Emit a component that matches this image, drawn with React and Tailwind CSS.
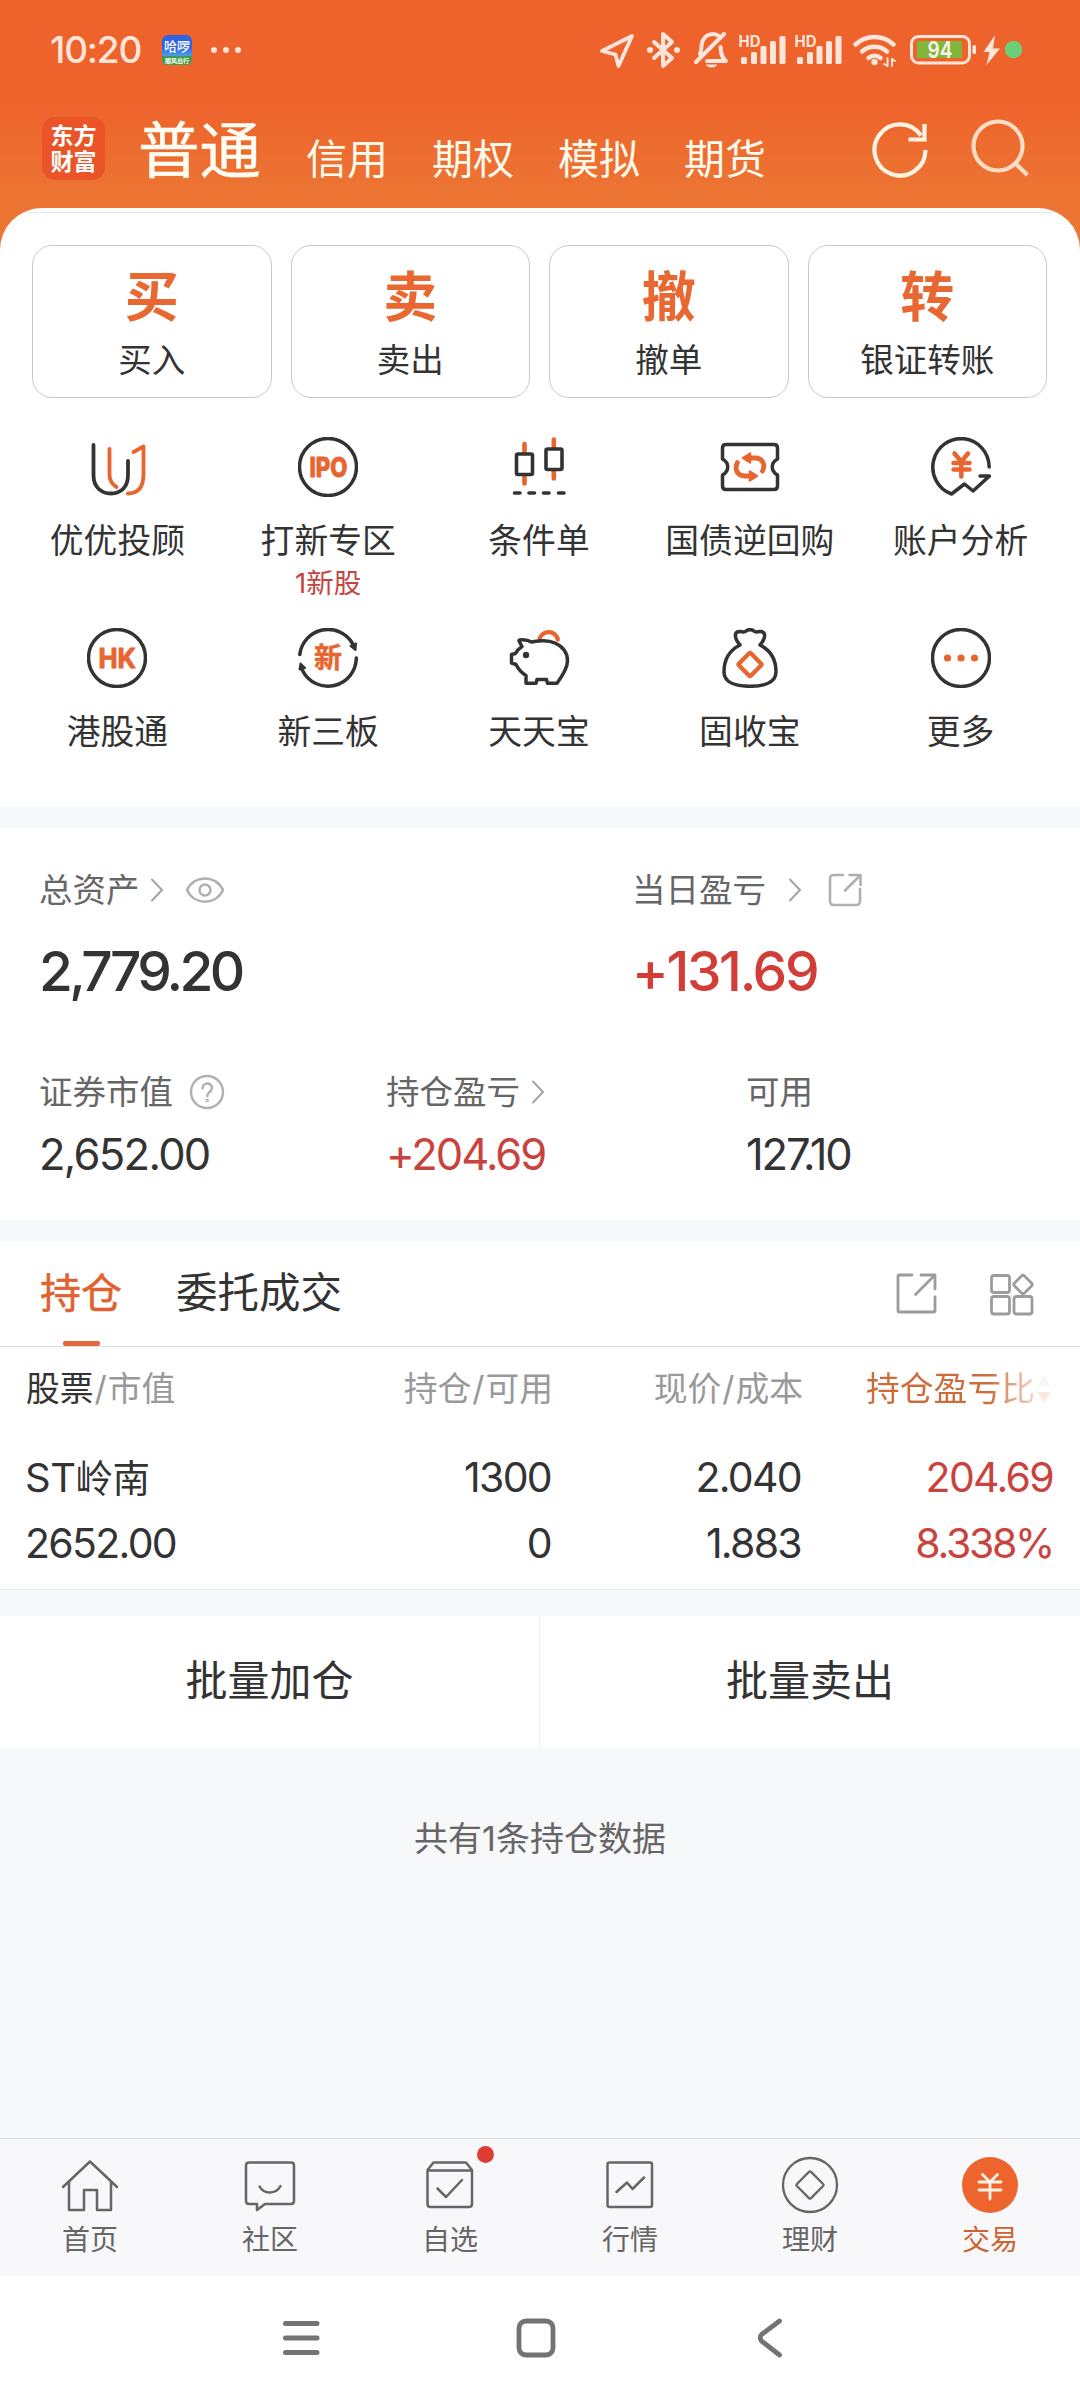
const DARK = "#333333";
const ORANGE = "#e8652f";

/* Icon canvas: `box` is "x y width height"; the drawing keeps that coordinate space. */
function Ic({ box, className = "", children, stroke = DARK, sw = 3.5 }) {
  const [, , w, h] = box.split(" ");
  return (
    <svg
      viewBox={box}
      width={w}
      height={h}
      className={`shrink-0 ${className}`}
      fill="none"
      stroke={stroke}
      strokeWidth={sw}
      strokeLinecap="round"
      strokeLinejoin="round"
    >
      {children}
    </svg>
  );
}

function Signal({ className }) {
  return (
    <Ic box="738 30 48 40" stroke="none" className={className}>
      <text x="738.500" y="46.500" fill="#fde5db" fontSize="15.500" fontWeight="700" textLength="22" lengthAdjust="spacingAndGlyphs">HD</text>
      <g fill="#fde5db">
        <rect x="741" y="57" width="6" height="7" rx="1.5" />
        <rect x="751" y="52" width="6" height="12" rx="1.5" />
        <rect x="760.500" y="46" width="6" height="18" rx="1.5" />
        <rect x="770" y="41" width="6" height="23" rx="1.5" />
        <rect x="779.500" y="36" width="6" height="28" rx="1.5" />
      </g>
    </Ic>
  );
}

function StatusBar() {
  const c = "#fde5db";
  return (
    <div className="flex h-[100px] items-start pt-[30px] pl-[50px]">
      <div className="h-10 w-[112px] text-[37px] leading-10 font-medium tracking-[-1.2px] text-[#fde5db]">10:20</div>
      <div className="mt-[5px] flex h-[30px] w-[30px] flex-col items-center overflow-hidden rounded-[6px] bg-gradient-to-b from-[#2f62e6] from-40% to-[#4d9be8] to-70%">
        <span className="h-[21px] text-[13px] leading-[23px] font-medium whitespace-nowrap text-white">哈啰</span>
        <span className="h-[9px] w-full bg-[#3f9d46] text-center text-[6px] leading-[9px] font-bold whitespace-nowrap text-white">顺风出行</span>
      </div>
      <div className="mt-[17px] ml-[19px] flex gap-[6px]">
        <i className="size-[6px] rounded-full bg-[#fde5db]" />
        <i className="size-[6px] rounded-full bg-[#fde5db]" />
        <i className="size-[6px] rounded-full bg-[#fde5db]" />
      </div>
      <div className="ml-auto flex pr-[56px]">
        <Ic box="598 30 38 40" stroke={c} sw={3.8}>
          <path d="M632 36 L602 51 L615.500 54.500 L618.500 66 Z" />
        </Ic>
        <Ic box="646 30 36 40" stroke={c} sw={4} className="ml-[10px]">
          <path d="M654 42 L672 58 L663 66 V34 L672 42 L654 58" />
          <circle cx="650" cy="50" r="3" fill={c} stroke="none" />
          <circle cx="677" cy="50" r="3" fill={c} stroke="none" />
        </Ic>
        <Ic box="693 30 36 40" stroke={c} sw={4} className="ml-[11px]">
          <path d="M696 62 L724 34" />
          <path d="M700 54 C702 50 701 46 702 43 C704 34 714 32 719 36" />
          <path d="M707 61 H726 C721 57 721 52 720.500 47" />
          <path d="M706 64.500 H717 C716 68.500 707 68.500 706 64.500Z" fill={c} stroke="none" />
        </Ic>
        <Signal className="ml-[9px]" />
        <Signal className="ml-[8px]" />
        <Ic box="852 30 46 40" stroke={c} sw={4.5} className="ml-[10px]">
          <path d="M855.500 44.500 C866 34.500 883 34.500 893.500 44.500" />
          <path d="M862 51.500 C869 45 880 45 887 51.500" />
          <path d="M868.500 58 C872 55 877 55 880.500 58" />
          <circle cx="874.500" cy="62" r="3.200" fill={c} stroke="none" />
          <path d="M884 64 L887.500 66 V58 M892 66 V59 L895 61" strokeWidth="2" />
        </Ic>
        <Ic box="909 30 68 40" stroke={c} sw={3} className="ml-[11px]">
          <rect x="911.500" y="36.500" width="58" height="26.500" rx="7" />
          <rect x="917" y="41" width="45" height="17" fill="#7fb63b" stroke="none" />
          <rect x="972.500" y="45" width="3.500" height="9" rx="1.500" fill={c} stroke="none" />
          <text x="927.500" y="58" fill="#fdf3e8" stroke="none" fontSize="23" fontWeight="600" textLength="25" lengthAdjust="spacingAndGlyphs">94</text>
        </Ic>
        <Ic box="982 30 42 40" stroke="none" className="ml-[5px]">
          <path d="M995 35 L983.500 52 H989.500 L986.500 65 L1000 48.500 H993 Z" fill={c} />
          <circle cx="1013.500" cy="49.500" r="8.700" fill="#6bcf77" />
        </Ic>
      </div>
    </div>
  );
}

function TopNav() {
  return (
    <div className="flex h-[108px] items-start pl-[42px]">
      <div className="mt-[17px] flex h-[63px] w-[63px] flex-col items-center justify-center rounded-[13px] bg-[#ea5427] text-[23px] leading-[26px] font-bold text-white">
        <span>东方</span>
        <span>财富</span>
      </div>
      <div className="mt-[11px] ml-[33px] w-[168px] text-[61.500px] leading-[80px] text-[#fffdf3] [-webkit-text-stroke:0.500px_#fffdf3]">普通</div>
      <div className="mt-[34px] flex gap-[44px] text-[41px] leading-[50px] text-[#fff9ec]">
        {["信用", "期权", "模拟", "期货"].map((t) => (
          <span key={t} className="w-[82px]">{t}</span>
        ))}
      </div>
      <Ic box="870 118 60 62" stroke="#fff3e3" sw={4.200} className="mt-[18px] ml-[104px]">
        <path d="M925.500 150 A25.500 25.500 0 1 1 921 135.500" strokeLinecap="butt" />
        <path d="M924.500 124 V139.500 H908.500" strokeLinecap="butt" strokeLinejoin="miter" />
      </Ic>
      <Ic box="970 118 62 62" stroke="#fddcc4" sw={4.200} className="mt-[18px] ml-[40px]">
        <circle cx="998" cy="146" r="24.500" />
        <path d="M1015.500 163.500 L1027.500 175" strokeLinecap="butt" />
      </Ic>
    </div>
  );
}

const actions = [
  ["买", "买入"],
  ["卖", "卖出"],
  ["撤", "撤单"],
  ["转", "银证转账"],
];

const shortcuts = [
  {
    label: "优优投顾",
    icon: (
      <Ic box="88 437 60 60" sw={3.800}>
        <path d="M94.500 445 V475 C94.500 487 102 493.500 112 493.500 C122 493.500 129 487 129 475 V461" />
        <path d="M110.500 449 V474 C110.500 480 112.500 484 117.500 487" stroke={ORANGE} />
        <path d="M134.500 452 L144.500 446.500 V474 C144.500 487 139 493.500 129 493.500" stroke={ORANGE} />
      </Ic>
    ),
  },
  {
    label: "打新专区",
    note: "1新股",
    icon: (
      <Ic box="299 437 60 60">
        <circle cx="329" cy="467" r="28.500" />
        <text x="310.500" y="476.800" fill={ORANGE} stroke={ORANGE} strokeWidth="0.800" fontSize="27" fontWeight="800" textLength="38" lengthAdjust="spacingAndGlyphs">IPO</text>
      </Ic>
    ),
  },
  {
    label: "条件单",
    icon: (
      <Ic box="510 437 60 60" sw={3.600}>
        <path d="M525.500 444 V452 M525.500 476 V483.500 M554.800 439.500 V447 M554.800 471 V478.500" stroke={ORANGE} strokeWidth="4.600" />
        <rect x="517.500" y="454" width="16" height="20.500" rx="1.500" />
        <rect x="547" y="449" width="16" height="20.500" rx="1.500" />
        <path d="M515.500 493 H521 M530 493 H535.500 M544.500 493 H550 M559.500 493 H565" />
      </Ic>
    ),
  },
  {
    label: "国债逆回购",
    icon: (
      <Ic box="721 437 60 60">
        <path d="M727 444.500 H775 Q778.500 444.500 778.500 448 V459 C771.500 463 771.500 471 778.500 475 V486 Q778.500 489.500 775 489.500 H727 Q723.500 489.500 723.500 486 V475 C730.500 471 730.500 463 723.500 459 V448 Q723.500 444.500 727 444.500Z" />
        <g stroke={ORANGE} strokeWidth="4.800">
          <path d="M750 458 H756 C764 458 766.500 465 763.500 471" />
          <path d="M752 476 H746 C738 476 735 469 738.500 462.500" />
        </g>
        <path d="M743.500 458 L751.500 453 V463Z M758.500 476 L750.500 471 V481Z" fill={ORANGE} stroke={ORANGE} strokeWidth="1.500" />
      </Ic>
    ),
  },
  {
    label: "账户分析",
    icon: (
      <Ic box="931 437 60 60">
        <path d="M989.200 467 A28.200 28.500 0 1 0 951.500 494 L964.500 484 L973 491 L989.500 476 H980" />
        <path d="M954.500 453.500 L961.300 461.500 L968 453.500 M961.300 462 V476.500 M953.500 463 H969.500 M953.500 469.500 H969.500" stroke={ORANGE} strokeWidth="4.500" />
      </Ic>
    ),
  },
  {
    label: "港股通",
    icon: (
      <Ic box="88 628 60 60">
        <circle cx="118" cy="658" r="28.500" />
        <text x="99.500" y="668" fill={ORANGE} stroke={ORANGE} strokeWidth="1" fontSize="27" fontWeight="700" textLength="37.500" lengthAdjust="spacingAndGlyphs">HK</text>
      </Ic>
    ),
  },
  {
    label: "新三板",
    icon: (
      <Ic box="299 628 60 60">
        <path d="M300.800 654.500 A28.400 28.400 0 0 1 353.500 643.500 M357.300 658 A28.400 28.400 0 0 1 303.500 670.500" />
        <path d="M351.500 646 L357 643.500 L356.500 650Z M300.500 669.500 L301.500 663.500 L306 668Z" fill={DARK} strokeWidth="2" />
        <text x="315" y="667.500" fill={ORANGE} stroke={ORANGE} strokeWidth="0.500" fontSize="28" fontWeight="700">新</text>
      </Ic>
    ),
  },
  {
    label: "天天宝",
    icon: (
      <Ic box="509 628 62 60">
        <path d="M540.800 638 A9.500 9.500 0 0 1 558.800 639.500" stroke={ORANGE} strokeWidth="4.300" />
        <path d="M520 641 Q520 639.800 522 639.800 C526 639.500 530 640.500 532.500 642 C540 640.500 550 640 556 643 C566 647.500 568.500 655 568.500 661 C568.500 668 564 675 558 683.200 H548.500 L547.500 679.500 H538 L537 683.200 H527 V675.500 C522 672.500 519 668.500 517 664.500 L512.500 663 V654.500 L516.500 653.500 C518 650.500 520 648.500 523 646.500 Z" />
        <circle cx="527" cy="655" r="3.200" fill={DARK} stroke="none" />
      </Ic>
    ),
  },
  {
    label: "固收宝",
    icon: (
      <Ic box="721 628 60 60">
        <path d="M741 645 C735 638 735 632 740 631.500 C743 631.300 745 632.700 746.500 631.500 C749 629 753 629 755.500 631.500 C757 632.700 759 631.300 762 631.500 C767 632 767 638 761 645 C773 651 777 661 777 672 C777 683 764 686.300 751 686.300 C738 686.300 725 683 725 672 C725 661 729 651 741 645Z" />
        <rect x="742.500" y="656" width="17" height="17" rx="1.500" transform="rotate(45 751 664.500)" stroke={ORANGE} strokeWidth="4.300" />
      </Ic>
    ),
  },
  {
    label: "更多",
    icon: (
      <Ic box="931 628 60 60">
        <circle cx="961" cy="658" r="28.500" />
        <g fill={ORANGE} stroke="none">
          <circle cx="947.500" cy="658" r="3.600" />
          <circle cx="961" cy="658" r="3.600" />
          <circle cx="974.500" cy="658" r="3.600" />
        </g>
      </Ic>
    ),
  },
];

function Actions() {
  return (
    <div className="h-[599px] overflow-hidden rounded-t-[42px] bg-white pt-1">
      <div className="h-px bg-[#e6e6e6]" />
      <div className="mt-8 grid grid-cols-4 gap-[19px] pr-[33px] pl-8">
        {actions.map(([big, label]) => (
          <div key={label} className="flex h-[153px] flex-col items-center rounded-[20px] border border-[#c9c9c9] pt-[21px]">
            <span className="text-[54px] leading-[62px] font-bold text-[#e96731]">{big}</span>
            <span className="mt-[9px] text-[33.500px] leading-[44px] text-[#333333]">{label}</span>
          </div>
        ))}
      </div>
      <div className="mt-[39px] grid grid-cols-5 pr-[14px] pl-[12px]">
        {shortcuts.map((s) => (
          <div key={s.label} className="flex h-[191px] flex-col items-center">
            {s.icon}
            <span className="mt-[22px] text-[33.800px] leading-[44px] whitespace-nowrap text-[#333333]">{s.label}</span>
            {s.note && <span className="mt-[3px] text-[27.500px] leading-[34px] text-[#c4453f]">{s.note}</span>}
          </div>
        ))}
      </div>
    </div>
  );
}

function Chevron({ className }) {
  return (
    <Ic box="0 0 14 24" stroke="#a3a3a3" sw={2} className={className}>
      <path d="M2 1.500 L12 12 L2 22.500" strokeLinejoin="miter" />
    </Ic>
  );
}

function Assets() {
  return (
    <div className="flex h-[392px] flex-col bg-white pl-[39px] text-[33.500px] text-[#666666]">
      <div className="mt-[40px] flex h-[44px] items-center leading-[44px]">
        <div className="flex w-[593px] items-center">
          总资产
          <Chevron className="ml-[10px]" />
          <Ic box="185 876 40 28" stroke="#b0b0b0" sw={2.500} className="ml-[21px]">
            <path d="M187 890 C194 874.500 216 874.500 223 890 C216 905.500 194 905.500 187 890Z" />
            <circle cx="205" cy="890" r="5.500" />
          </Ic>
        </div>
        当日盈亏
        <Chevron className="ml-[22px]" />
        <Ic box="828 872 36 36" stroke="#b0b0b0" sw={2.600} className="ml-[26px]">
          <path d="M843 875 H834 Q830 875 830 879 V901 Q830 905 834 905 H856 Q860 905 860 901 V889" />
          <path d="M845 890.500 L859.500 876 M849.500 875 H860.500 V885" />
        </Ic>
      </div>
      <div className="mt-[24px] flex h-[70px] text-[55px] leading-[70px] font-medium">
        <div className="w-[593px] tracking-[-3.700px] text-[#333333]">2,779.20</div>
        <div className="tracking-[-2.300px] text-[#d23d37]">+131.69</div>
      </div>
      <div className="mt-[64px] flex h-[44px] items-center leading-[44px]">
        <div className="flex w-[347px] items-center">
          证券市值
          <Ic box="189 1074 36 36" stroke="#b0b0b0" sw={2.400} className="ml-[16px]">
            <circle cx="207" cy="1092" r="16" />
            <path d="M202.500 1088.500 C202.500 1082 212 1082 212 1088 C212 1092 207.200 1092 207.200 1096" />
            <circle cx="207.200" cy="1100.500" r="0.600" />
          </Ic>
        </div>
        <div className="flex w-[360px] items-center">
          持仓盈亏
          <Chevron className="ml-[11px]" />
        </div>
        可用
      </div>
      <div className="mt-[12px] flex h-[56px] text-[43.500px] leading-[56px] text-[#333333]">
        <div className="w-[347px] tracking-[-1.700px]">2,652.00</div>
        <div className="w-[360px] tracking-[-2px] text-[#c9433e]">+204.69</div>
        <div className="tracking-[-2.100px]">127.10</div>
      </div>
    </div>
  );
}

function Holdings() {
  return (
    <div className="h-[349px] border-b border-[#ebecee] bg-white">
      <div className="flex h-[106px] border-b border-[#dedede] pl-[40px]">
        <div className="flex w-[82px] flex-col items-center">
          <span className="mt-[26px] h-[74px] text-[41px] leading-[52px] text-[#e0622f] [-webkit-text-stroke:0.500px_#e0622f]">持仓</span>
          <span className="h-[5px] w-[37px] rounded-[2px] bg-[#e0683a]" />
        </div>
        <span className="mt-[26px] ml-[54px] text-[41.500px] leading-[52px] text-[#333333]">委托成交</span>
        <Ic box="896 1272 42 42" stroke="#9c9c9c" sw={2.800} className="mt-[31px] ml-[554px]">
          <path d="M912 1275 H899.500 Q898 1275 898 1276.500 V1310.500 Q898 1312 899.500 1312 H933.500 Q935 1312 935 1310.500 V1297" />
          <path d="M915.500 1294.500 L934 1276 M921 1275 H935 V1289" />
        </Ic>
        <Ic box="988 1272 46 46" stroke="#9c9c9c" sw={2.800} className="mt-[31px] ml-[50px]">
          <rect x="991.500" y="1275.500" width="18" height="17" rx="2.500" />
          <rect x="991.500" y="1296.500" width="18" height="17.500" rx="2.500" />
          <rect x="1014" y="1296.500" width="18" height="17.500" rx="2.500" />
          <path d="M1021.500 1276 Q1023 1274.500 1024.500 1276 L1031.500 1283 Q1033 1284.500 1031.500 1286 L1024.500 1293 Q1023 1294.500 1021.500 1293 L1014.500 1286 Q1013 1284.500 1014.500 1283Z" />
        </Ic>
      </div>
      <div className="grid grid-cols-[300px_227px_250px_1fr] pt-[20px] pr-[28px] pl-[26px] text-right text-[33.800px] leading-[44px] text-[#999999]">
        <div className="text-left"><span className="text-[#333333]">股票</span><span className="px-px">/</span>市值</div>
        <div>持仓<span className="px-px">/</span>可用</div>
        <div>现价<span className="px-px">/</span>成本</div>
        <div className="flex items-center justify-end whitespace-nowrap">
          <span className="bg-gradient-to-r from-[#cb6c3a] from-72% to-[#cb6c3a]/25 bg-clip-text text-transparent">持仓盈亏比</span>
          <Ic box="0 0 16 32" stroke="none" className="ml-px">
            <path d="M8 2 L14.500 13 H1.500Z" fill="#f5f6f8" />
            <path d="M8 30 L14.500 19 H1.500Z" fill="#fbe9e0" />
          </Ic>
        </div>
      </div>
      <div className="grid grid-cols-[300px_226px_250px_1fr] pt-[34px] pr-[27px] pl-[25px] text-right text-[41px] leading-[65px] tracking-[-1.700px] text-[#333333]">
        <div className="text-left text-[40px] tracking-[-0.500px]">ST<span className="text-[37.500px]">岭南</span></div>
        <div>1300</div>
        <div>2.040</div>
        <div className="text-[#c9433e]">204.69</div>
        <div className="text-left">2652.00</div>
        <div>0</div>
        <div>1.883</div>
        <div className="tracking-[-2.300px] text-[#c9433e]">8.338%</div>
      </div>
    </div>
  );
}

const G = "#666666";
const tabs = [
  ["首页", <Ic box="60 2155 60 60" stroke={G} sw={2.500}><path d="M63 2187 L90 2161.500 L117 2187 M69 2182 V2210 H84 V2190 H97 V2210 H111 V2182" /></Ic>],
  ["社区", <Ic box="240 2155 60 60" stroke={G} sw={2.500}><path d="M249 2162.500 H291 Q294 2162.500 294 2165.500 V2201 Q294 2204 291 2204 H265 L257 2210 V2204 H249 Q246 2204 246 2201 V2165.500 Q246 2162.500 249 2162.500Z" /><path d="M259.500 2186.500 C264 2194.500 276 2194.500 280.500 2186" /></Ic>],
  ["自选", <Ic box="420 2155 60 60" stroke={G} sw={2.500}><path d="M427.500 2170 L433.500 2162.500 H466 L472 2170 M427.500 2170.500 H472 V2204 Q472 2207 469 2207 H430.500 Q427.500 2207 427.500 2204Z M437.500 2188.500 L446 2197 L462 2180" /></Ic>],
  ["行情", <Ic box="600 2155 60 60" stroke={G} sw={2.500}><rect x="607.500" y="2162.500" width="44.500" height="44.500" rx="2" /><path d="M616.500 2192 L627 2182.500 L632.500 2189 L644 2177.500" /></Ic>],
  ["理财", <Ic box="780 2155 60 60" stroke={G} sw={2.300}><circle cx="810" cy="2185" r="27" /><rect x="800" y="2175" width="20" height="20" rx="1.500" transform="rotate(45 810 2185)" /></Ic>],
  ["交易", <Ic box="960 2155 60 60" stroke="#fff3e6" sw={2.800}><circle cx="990" cy="2185" r="28" fill="#ed642c" stroke="none" /><path d="M982.500 2174.500 L990 2182 L997.500 2174.500 M990 2182 V2199 M979 2182 H1001 M979 2190 H1001" /></Ic>],
];

function TabBar() {
  return (
    <div className="grid h-[138px] grid-cols-6 border-t border-[#e0e1e3] bg-[#f8f8fb]">
      {tabs.map(([label, icon], i) => (
        <div key={label} className="relative flex flex-col items-center pt-[16px]">
          {icon}
          <span className={i === 5 ? "mt-[7px] text-[28px] leading-[36px] text-[#cf6231]" : "mt-[7px] text-[28px] leading-[36px] text-[#666666]"}>{label}</span>
          {i === 2 && <i className="absolute top-[7px] left-[117px] size-[17px] rounded-full bg-[#dc3c32]" />}
        </div>
      ))}
    </div>
  );
}

export default function App() {
  return (
    <div className="flex h-[2400px] w-[1080px] flex-col overflow-hidden bg-[#f7f8fa] font-['Inter','Noto_Sans_CJK_SC',sans-serif]">
      <div className="bg-[linear-gradient(to_bottom,#ee622b_0px,#ee622b_95px,#ec7433_190px,#ec7733_260px)]">
        <StatusBar />
        <TopNav />
        <Actions />
      </div>
      <div className="h-[21px]" />
      <Assets />
      <div className="h-[21px]" />
      <Holdings />
      <div className="mt-[26px] grid h-[131px] grid-cols-2 bg-white text-center text-[42px] leading-[130px] text-[#333333]">
        <div className="border-r border-[#eeeff1]">批量加仓</div>
        <div>批量卖出</div>
      </div>
      <div className="mt-[70px] h-[44px] text-center text-[34px] leading-[44px] text-[#666666]">共有1条持仓数据</div>
      <div className="grow" />
      <TabBar />
      <div className="flex h-[124px] items-center bg-white">
        <Ic box="280 2316 44 44" stroke="#737373" sw={5} className="ml-[280px]">
          <path d="M285.500 2323.500 H317 M285.500 2338 H317 M285.500 2352.500 H317" />
        </Ic>
        <Ic box="514 2316 44 44" stroke="#737373" sw={4.800} className="ml-[190px]">
          <rect x="519" y="2321" width="34" height="34" rx="7" />
        </Ic>
        <Ic box="752 2316 36 44" stroke="#737373" sw={4.800} className="ml-[194px]">
          <path d="M779.500 2321 L761.500 2334.500 Q759 2337.500 761.500 2341 L779.500 2355" />
        </Ic>
      </div>
    </div>
  );
}
